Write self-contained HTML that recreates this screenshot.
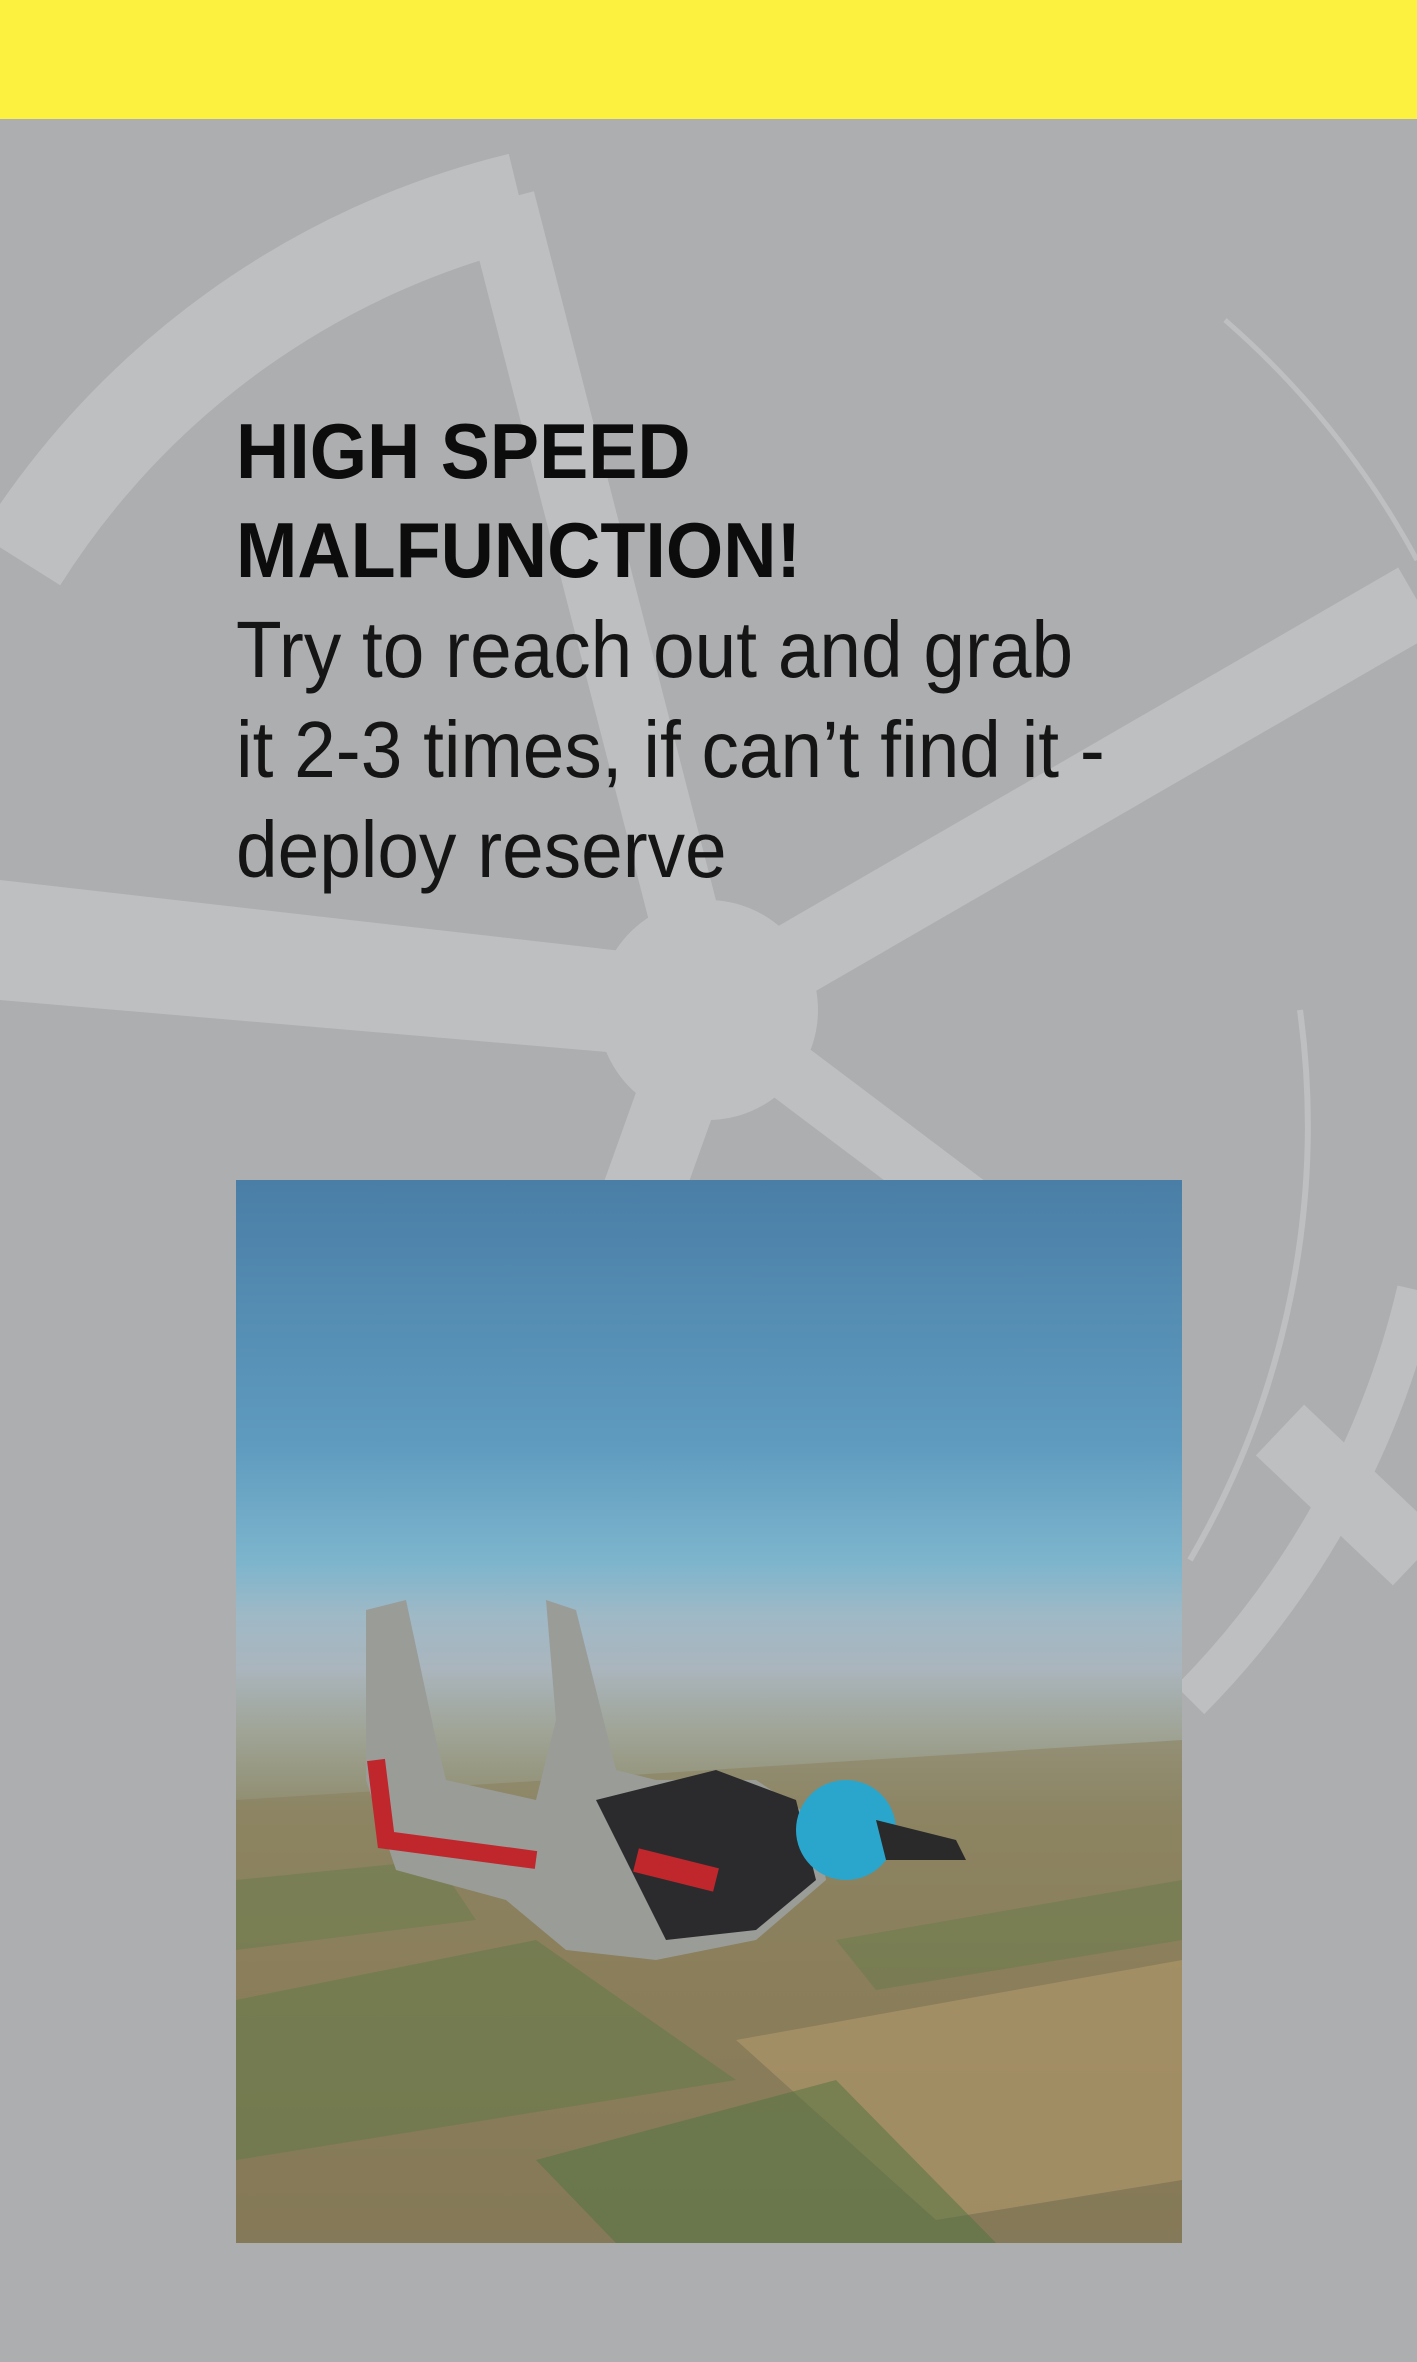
<!DOCTYPE html>
<html><head><meta charset="utf-8"><style>
html,body{margin:0;padding:0}
body{width:1417px;height:2362px;background:#adaeb0;position:relative;overflow:hidden;font-family:"Liberation Sans",sans-serif}
.y{position:absolute;left:0;top:0;width:1417px;height:119px;background:#fdf140}
svg.bg{position:absolute;left:0;top:0}
.t{position:absolute;left:236px;top:402px;color:#0c0c0c;white-space:nowrap}
.h{font-weight:bold;font-size:78px;line-height:99px;transform-origin:0 0;transform:scaleX(0.945)}
.b{font-size:80px;line-height:100px;font-weight:normal;transform-origin:0 0;transform:scaleX(0.935);color:#151515}
.p{position:absolute;left:236px;top:1180px;width:946px;height:1063px;overflow:hidden;
background:linear-gradient(#4a7ea6 0%,#5f9bbf 25%,#7db5cd 36%,#9fb9c6 41%,#aab5bd 46%,#9fa496 52%,#8e8a6a 60%,#8c7f5c 75%,#7f7456 100%)}
</style></head><body>
<div class="y"></div>
<svg class="bg" width="1417" height="2362" viewBox="0 0 1417 2362">
<g fill="none" stroke="#bebfc1">
<path d="M20 560 A820 820 0 0 1 520 200" stroke-width="95"/>
<path d="M1225 320 A860 860 0 0 1 1417 560" stroke-width="5"/>
<path d="M1300 1010 A860 860 0 0 1 1190 1560" stroke-width="6"/>
<path d="M1417 1290 A860 860 0 0 1 1190 1700" stroke-width="40"/>
<path d="M1280 1430 L1417 1560" stroke-width="70"/>
<line x1="708" y1="1010" x2="500" y2="200" stroke-width="70"/>
<path d="M0 880 L700 960 L700 1060 L0 1000Z" fill="#bebfc1" stroke="none"/>
<line x1="708" y1="1010" x2="1417" y2="600" stroke-width="75"/>
<line x1="708" y1="1010" x2="1000" y2="1230" stroke-width="60"/>
<line x1="708" y1="1010" x2="640" y2="1200" stroke-width="80"/>
</g>
<circle cx="708" cy="1010" r="110" fill="#bebfc1"/>
</svg>
<div class="t"><div class="h">HIGH SPEED<br>MALFUNCTION!</div><div class="b">Try to reach out and grab<br>it 2-3 times, if can’t find it -<br>deploy reserve</div></div>
<div class="p">
<svg width="946" height="1063" viewBox="0 0 946 1063">
<path d="M0 620 L946 560 L946 1063 L0 1063Z" fill="#8a7d5a" opacity="0.5"/>
<path d="M0 820 L300 760 L500 900 L0 980Z" fill="#5f7a45" opacity="0.5"/>
<path d="M500 860 L946 780 L946 1000 L700 1040Z" fill="#b39a6b" opacity="0.6"/>
<path d="M300 980 L600 900 L760 1063 L380 1063Z" fill="#4f7440" opacity="0.5"/>
<path d="M0 700 L200 680 L240 740 L0 770Z" fill="#5f7a45" opacity="0.4"/>
<path d="M600 760 L946 700 L946 760 L640 810Z" fill="#5f7a45" opacity="0.4"/>
<path d="M130 430 L170 420 L200 560 L210 600 L300 620 L320 540 L310 420 L340 430 L380 590 L420 600 L520 600 L580 640 L590 700 L520 760 L420 780 L330 770 L270 720 L160 690 L130 600 Z" fill="#9a9c98"/>
<path d="M360 620 L480 590 L560 620 L580 700 L520 750 L430 760 Z" fill="#2b2b2d"/>
<path d="M140 580 L150 660 L300 680" fill="none" stroke="#c0272d" stroke-width="18"/>
<path d="M400 680 L480 700" stroke="#c0272d" stroke-width="24"/>
<circle cx="610" cy="650" r="50" fill="#2aa6cc"/>
<path d="M640 640 L720 660 L730 680 L650 680Z" fill="#2a2a2a"/>
</svg>
</div>
</body></html>
